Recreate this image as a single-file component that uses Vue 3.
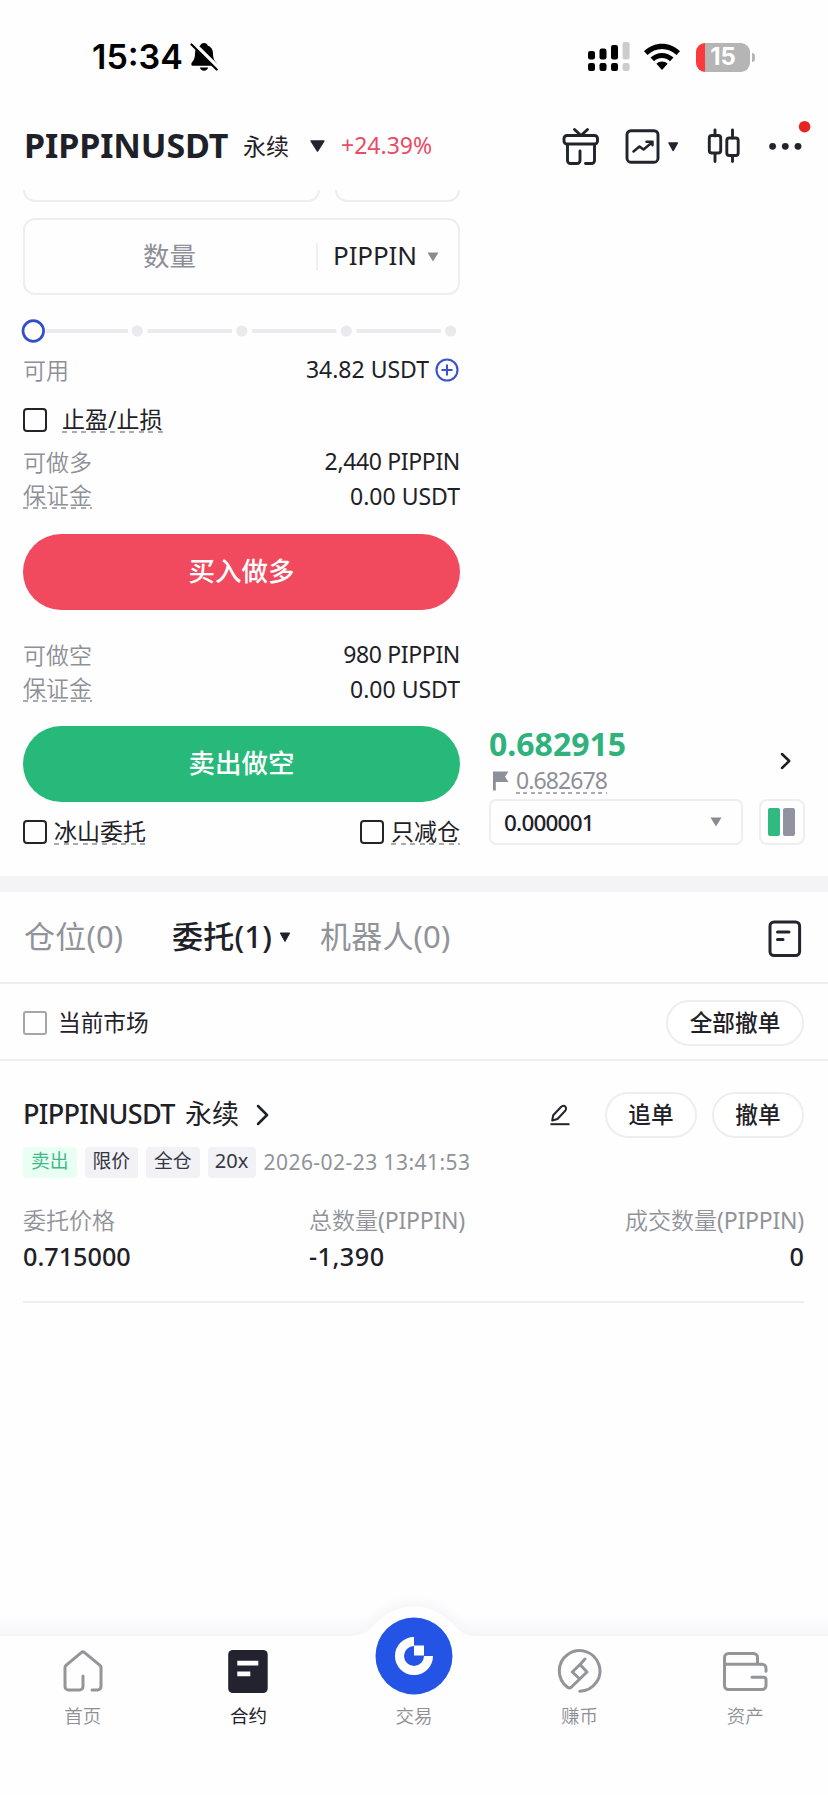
<script setup>
const tags = [
  { text: '限价', cls: 'w54' },
  { text: '全仓', cls: 'w54' },
  { text: '20x', cls: 'w48' },
]
const dots = [137.3, 241.8, 346.3, 450.5]
</script>

<template>
  <div class="page">
    <div class="status">
      <span class="time">15:34</span>
      <svg class="bell" width="28" height="30" viewBox="0 0 28 30">
        <path d="M14 1c-2 0-3.300 1.100-3.700 2.500C6.800 4.800 5 7.800 5 11.500c0 5-1.500 7-3.300 9.200C.8 22 1.300 23.800 3 23.800h22c1.700 0 2.200-1.800 1.300-3.100C24.500 18.500 23 16.500 23 11.500c0-3.700-1.800-6.700-5.300-8C17.300 2.100 16 1 14 1z" />
        <path d="M9.800 25.500h8.400c-.5 2-2 3.200-4.200 3.200s-3.700-1.200-4.200-3.200z" />
        <path d="M2 .5L28.500 26.500" stroke="#fff" stroke-width="5" />
        <path d="M1.500 2.500L26.700 27.500" stroke="#000" stroke-width="2.200" stroke-linecap="round" />
      </svg>
      <svg class="signal" width="44" height="30" viewBox="0 0 44 30">
        <g fill="#000">
          <rect x="1" y="9" width="7" height="8.500" rx="2.200" /><rect x="12.500" y="6.500" width="7" height="11" rx="2.200" /><rect x="24" y="3" width="7" height="14.500" rx="2.200" />
          <rect x="1" y="21" width="7" height="8" rx="2.200" /><rect x="12.500" y="21" width="7" height="8" rx="2.200" /><rect x="24" y="21" width="7" height="8" rx="2.200" />
        </g>
        <g fill="#ccc"><rect x="35.600" y="0" width="7" height="17.500" rx="2.200" /><rect x="35.600" y="21" width="7" height="8" rx="2.200" /></g>
      </svg>
      <svg class="wifi" width="38" height="28" viewBox="0 0 38 28">
        <path d="M1 8.200C11-1.900 27-1.900 37 8.200l-3.500 3.700c-8-8-21-8-29 0z" />
        <path d="M7.500 14.600c6.500-6.300 16.500-6.300 23 0L27 18.200c-4.500-4.400-11.500-4.400-16 0z" />
        <path d="M13.400 20.800c3.200-3 8-3 11.200 0L19 27z" />
      </svg>
      <div class="battery"><span>15</span></div>
      <i class="nub"></i>
    </div>

    <header class="head">
      <h1>PIPPINUSDT</h1>
      <span class="perp">永续</span>
      <svg class="tri" width="15" height="12" viewBox="0 0 15 12"><path d="M1.200 1h12.600L7.500 11z" stroke="#22252f" stroke-width="1.500" stroke-linejoin="round" fill="#22252f" /></svg>
      <span class="chg">+24.39%</span>
      <svg class="tools" width="270" height="50" viewBox="0 0 270 50" fill="none" stroke="#22242c" stroke-width="2.900" stroke-linecap="round" stroke-linejoin="round">
        <path d="M21.500 7.500l6.500 6 6.500-6" />
        <rect x="11" y="13.500" width="33.500" height="8.500" rx="3" />
        <path d="M14.500 22.500v16a3 3 0 0 0 3 3h6.500a3 3 0 0 0 3-3v-9.500M41.500 22.500v16a3 3 0 0 1-3 3h-6" />
        <rect x="74" y="8.700" width="31" height="31.500" rx="4" />
        <path d="M80.500 29.500l6-5 4 3 8.500-7M93.500 19.800h6v3.500" stroke-width="2.500" />
        <path d="M116 21h8.400l-4.200 7.500z" fill="#22242c" stroke-width="1.500" />
        <path d="M162 8v6M162 31.500v8M179.500 8v8M179.500 34v5.500" />
        <rect x="156.300" y="13.500" width="11.400" height="17.500" rx="2.500" />
        <rect x="173.800" y="16" width="11.400" height="17.500" rx="2.500" />
        <g fill="#22242c" stroke="none"><circle cx="219.600" cy="24.300" r="3.400" /><circle cx="232.300" cy="24.300" r="3.400" /><circle cx="245" cy="24.300" r="3.400" /></g>
        <circle cx="251.600" cy="4.700" r="5.800" fill="#e92222" stroke="none" />
      </svg>
    </header>

    <main class="trade">
      <section class="form">
        <div class="cut"><i class="c1"></i><i class="c2"></i></div>
        <div class="qty">
          <span class="ph">数量</span>
          <span class="unit">PIPPIN</span>
          <svg width="12" height="10" viewBox="0 0 12 10"><path d="M.5.500h11L6 9.500z" fill="#888b91" /></svg>
        </div>
        <svg class="slider" width="460" height="32" viewBox="0 0 460 32">
          <path d="M46 16H128M147.500 16H232M252 16H336.500M356.500 16H441" stroke="#ebebef" stroke-width="4" />
          <circle v-for="d in dots" :key="d" :cx="d" cy="16" r="5.600" fill="#e9e9ee" />
          <circle cx="33.300" cy="16" r="10.300" fill="#fff" stroke="#314fcb" stroke-width="2.700" />
        </svg>
        <div class="row avail">
          <span class="lab">可用</span>
          <span class="val">34.82 USDT</span>
          <svg width="24" height="24" viewBox="0 0 24 24" fill="none" stroke="#3a52cc" stroke-width="2.100"><circle cx="12" cy="12" r="10.500" /><path d="M12 6.500v11M6.500 12h11" /></svg>
        </div>
        <div class="row tpsl"><i class="box"></i><span class="dash">止盈/止损</span></div>
        <div class="row r34"><span class="lab">可做多</span><span class="val tight">2,440 PIPPIN</span></div>
        <div class="row r34"><span class="lab dash">保证金</span><span class="val">0.00 USDT</span></div>
        <div class="btn red">买入做多</div>
        <div class="row r34"><span class="lab">可做空</span><span class="val tight">980 PIPPIN</span></div>
        <div class="row r34"><span class="lab dash">保证金</span><span class="val">0.00 USDT</span></div>
        <div class="btn green">卖出做空</div>
        <div class="row opts">
          <i class="box"></i><span class="dash">冰山委托</span>
          <i class="box b2"></i><span class="dash">只减仓</span>
        </div>
      </section>

      <aside class="book">
        <div class="quote">
          <div>
            <div class="price">0.682915</div>
            <div class="mark">
              <svg width="17" height="20" viewBox="0 0 17 20"><path d="M1 .5h15.500l-3.500 5.200 3.500 5.200H3.800v8.600H1z" fill="#8e9099" /></svg>
              <span class="dash">0.682678</span>
            </div>
          </div>
          <svg class="go" width="12" height="18" viewBox="0 0 12 18"><path d="M2 2l7.200 7L2 16" fill="none" stroke="#1d1e22" stroke-width="2.500" stroke-linecap="round" stroke-linejoin="round" /></svg>
        </div>
        <div class="picks">
          <div class="select"><span>0.000001</span><svg width="12" height="10" viewBox="0 0 12 10"><path d="M.5.500h11L6 9.500z" fill="#888b91" /></svg></div>
          <div class="mode"><i></i><i class="g"></i></div>
        </div>
      </aside>
    </main>

    <div class="band"></div>

    <nav class="tabs">
      <span class="t1">仓位(0)</span>
      <span class="t2">委托(1)</span>
      <svg width="12" height="11" viewBox="0 0 12 11"><path d="M1.300 1h9.400L6 9.500z" fill="#1d2029" stroke="#1d2029" stroke-linejoin="round" /></svg>
      <span class="t3">机器人(0)</span>
      <svg class="doc" width="34" height="38" viewBox="0 0 34 38" fill="none" stroke="#22242f" stroke-width="3" stroke-linecap="round"><rect x="2" y="2" width="29.600" height="33.600" rx="4" /><path d="M9.500 12h11.500M9.500 19.500h5.500" /></svg>
    </nav>

    <div class="filter">
      <i class="box thin"></i><span class="cur">当前市场</span><span class="pill big">全部撤单</span>
    </div>

    <section class="order">
      <div class="otop">
        <span class="sym">PIPPINUSDT</span><span class="oz">永续</span>
        <svg width="14" height="22" viewBox="0 0 14 22"><path d="M2 2l9 9-9 9" fill="none" stroke="#1d2026" stroke-width="2.500" stroke-linecap="round" stroke-linejoin="round" /></svg>
        <svg class="pen" width="22" height="22" viewBox="0 0 22 22" fill="none" stroke="#22252d" stroke-width="2" stroke-linejoin="round"><path d="M3.200 16.500l1-5.200L12 3c1.200-1.300 3-1.500 4.200-.4s1.200 2.900 0 4.100L8.500 15z" /><path d="M1.500 20.200h19" /></svg>
        <span class="pill">追单</span><span class="pill">撤单</span>
      </div>
      <div class="tags">
        <span class="tag w54 sell">卖出</span>
        <span v-for="t in tags" :key="t.text" class="tag" :class="t.cls">{{ t.text }}</span>
        <time>2026-02-23 13:41:53</time>
      </div>
      <div class="cols">
        <div class="a"><p>委托价格</p><b>0.715000</b></div>
        <div class="m"><p>总数量<em>(PIPPIN)</em></p><b>-1,390</b></div>
        <div class="z"><p>成交数量<em>(PIPPIN)</em></p><b>0</b></div>
      </div>
    </section>

    <footer class="nav">
      <svg class="edge" width="828" height="60" viewBox="0 0 828 60">
        <defs>
          <linearGradient id="sh" x1="0" y1="0" x2="0" y2="1"><stop offset="0" stop-color="#f6f6fa" stop-opacity="0" /><stop offset="1" stop-color="#f5f5f9" /></linearGradient>
          <radialGradient id="rg"><stop offset=".78" stop-color="#f6f6fa" /><stop offset="1" stop-color="#f6f6fa" stop-opacity="0" /></radialGradient>
        </defs>
        <rect y="23" width="828" height="22" fill="url(#sh)" />
        <circle cx="414" cy="66" r="63" fill="url(#rg)" />
        <path d="M0 45H350C366 45 370 38 377 31C399 10 429 10 451 31C458 38 462 45 478 45H828V60H0z" fill="#fefefe" />
      </svg>
      <div class="item">
        <svg width="46" height="46" viewBox="0 0 46 46" fill="none" stroke="#939598" stroke-width="3" stroke-linecap="round" stroke-linejoin="round"><path d="M23 28v10.500a3.500 3.500 0 0 1-3.500 3.500H8.500A3.500 3.500 0 0 1 5 38.500V19.500a3 3 0 0 1 1-2.200L21.200 4.600a2.500 2.500 0 0 1 3.400 0L40 17.300a3 3 0 0 1 1 2.200v19a3.500 3.500 0 0 1-3.500 3.500H32" /></svg>
        <span>首页</span>
      </div>
      <div class="item on">
        <svg width="46" height="46" viewBox="0 0 46 46"><rect x="3.200" y="2" width="39.500" height="43" rx="4.500" fill="#22232f" /><path d="M12.300 15.200h21M12.300 25.800h13" stroke="#fff" stroke-width="4.800" /></svg>
        <span>合约</span>
      </div>
      <div class="item">
        <div class="orb"><svg width="78" height="78" viewBox="0 0 78 78"><circle cx="39" cy="39" r="38.500" fill="#2354e6" /><path d="M39 24.500A14.500 14.500 0 1 0 53.500 39" fill="none" stroke="#fff" stroke-width="9" /><rect x="39" y="28.500" width="10" height="10" fill="#fff" /></svg></div>
        <span>交易</span>
      </div>
      <div class="item">
        <svg width="46" height="46" viewBox="0 0 46 46" fill="none" stroke="#939598" stroke-width="3" stroke-linecap="round" stroke-linejoin="round"><path d="M22.800 43.200A20.300 20.300 0 1 0 10.500 39.200Q13 41 15 38.500L30 24L23 16.500L15.300 24L22.800 31M23 16.500L28 11" /></svg>
        <span>赚币</span>
      </div>
      <div class="item">
        <svg width="46" height="46" viewBox="0 0 46 46" fill="none" stroke="#939598" stroke-width="3" stroke-linecap="round" stroke-linejoin="round"><path d="M2.500 16.500V9.500a4 4 0 0 1 4-4h25a4 4 0 0 1 4 4v6.500M2.500 16.500V37.500a4 4 0 0 0 4 4h33.500a4 4 0 0 0 4-4v-5.700a2.500 2.500 0 0 0-2.500-2.500H30M2.500 16.200h37.500a4 4 0 0 1 4 4v3" /></svg>
        <span>资产</span>
      </div>
    </footer>
  </div>
</template>

<style>
body { margin: 0; background: #fefefe; }
</style>

<style scoped>
* { box-sizing: border-box; }
.page { width: 828px; height: 1795px; display: flex; flex-direction: column; background: #fefefe; color: #1f2128; font-family: "Noto Sans", "Noto Sans CJK SC", sans-serif; font-size: 23px; overflow: hidden; white-space: nowrap; }
svg { display: block; flex: none; }
.status { height: 102px; display: flex; align-items: center; padding: 12px 0 0 92px; flex: none; }
.time { font: 600 34px/40px Inter, sans-serif; color: #000; width: 98px; }
.signal { margin-left: 369px; }
.wifi { margin-left: 12px; }
.battery { margin-left: 15px; width: 54px; height: 29px; border-radius: 9px; background: linear-gradient(90deg, #fb3a3e 8.500px, #b5b5b5 8.500px); color: #fff; font: 700 24px/28px Inter, sans-serif; text-align: center; }
.nub { width: 3px; height: 9px; border-radius: 0 4px 4px 0; background: #b5b5b5; margin-left: 2px; }
.head { height: 88px; display: flex; align-items: center; padding: 0 0 2px 24px; flex: none; }
h1 { margin: 0; font-size: 34px; line-height: 40px; font-weight: 700; width: 219px; letter-spacing: -.1px; }
.perp { font-size: 23px; width: 67px; font-weight: 400; }
.tri { margin-top: 2px; }
.chg { color: #e84c66; font-size: 23px; margin-left: 16px; width: 100px; }
.tools { margin: 4px 0 0 112px; overflow: visible; }
.trade { height: 686px; display: flex; flex: none; }
.form { width: 460px; padding-left: 23px; flex: none; }
.cut { height: 12px; display: flex; gap: 15px; overflow: hidden; align-items: flex-end; }
.cut i { height: 40px; border: 2px solid #eeeef0; border-radius: 12px; }
.c1 { width: 297px; flex: none; } .c2 { width: 125px; }
.qty { margin-top: 16px; height: 77px; border: 2px solid #eeeeF0; border-radius: 12px; display: flex; align-items: center; }
.ph { width: 293px; height: 28px; line-height: 26px; text-align: center; color: #8d9097; font-size: 26.500px; border-right: 2px solid #f0f0f2; padding-right: 2px; }
.unit { font-size: 26px; line-height: 34px; font-weight: 450; width: 94px; margin: 0 0 3px 15px; letter-spacing: -.1px; }
.slider { margin: 20px 0 0 -23px; }
.row { display: flex; align-items: center; }
.lab { color: #8d9097; font-weight: 350; padding: 0 0 3px; }
.val { margin-left: auto; padding-bottom: 2px; }
.tight { letter-spacing: -.35px; }
.avail { height: 46px; }
.avail svg { margin: 0 1px 0 6px; }
.tpsl { height: 54px; margin-bottom: -2px; }
.box { width: 24px; height: 24px; border: 2.500px solid #22242a; border-radius: 4px; flex: none; }
.tpsl .dash { margin-left: 15px; }
.r34 { height: 34.500px; }
.dash { height: 26px; line-height: 24px; padding: 0; background: repeating-linear-gradient(90deg, #a9abb2 0 5px, transparent 5px 9.600px) left bottom / 100% 2px no-repeat; }
.r34 .dash { margin-top: -2px; }
.btn { height: 76px; border-radius: 38px; color: #fff; font-size: 26.500px; font-weight: 500; line-height: 75px; text-align: center; }
.red { background: #f1495d; margin: 20px 0 28px; }
.green { background: #26b97a; margin: 19px 0 0; }
.opts { height: 58px; margin-top: 1px; }
.opts .dash { margin-left: 7px; font-size: 23px; }
.opts .b2 { margin-left: auto; }
.book { width: 345px; padding: 530px 0 0 29px; flex: none; }
.quote { display: flex; height: 79px; justify-content: space-between; width: 303px; }
.price { font-size: 32px; line-height: 40px; height: 40px; padding-top: 4px; font-weight: 700; color: #30b27c; }
.mark { display: flex; align-items: center; height: 41px; color: #8e9099; }
.mark svg { margin: 0 7px 0 3px; }
.go { margin-top: 32px; }
.mark .dash { letter-spacing: -.9px; background-image: repeating-linear-gradient(90deg, #a9abb2 0 4px, transparent 4px 7.500px); }
.picks { display: flex; gap: 16px; }
.select { width: 254px; height: 46px; border: 2px solid #eeeeF0; border-radius: 7px; display: flex; align-items: center; justify-content: space-between; padding: 0 19px 0 13px; font-weight: 500; font-size: 22.500px; letter-spacing: -.8px; }
.mode { width: 46px; height: 46px; border: 2px solid #eeeeF0; border-radius: 8px; display: flex; gap: 3px; align-items: center; justify-content: center; flex: none; padding-right: 1px; }
.mode i { width: 12px; height: 28px; background: #30b981; border-radius: 2px; }
.mode .g { background: #9193a0; }
.band { height: 16px; background: #f4f4f7; flex: none; }
.tabs { height: 92px; border-bottom: 2px solid #eeeeF0; display: flex; align-items: center; padding: 0 0 0 24px; font-size: 31px; color: #909399; flex: none; letter-spacing: .2px; }
.tabs span { padding-bottom: 5px; }
.tabs svg { margin-top: 1px; }
.t1 { width: 148px; } .t2 { width: 107px; color: #1f2128; font-weight: 500; } .t3 { margin-left: 29px; width: 448px; }
.tabs .doc { margin: 3px 0 0; }
.filter { height: 77px; border-bottom: 2px solid #eeeeF0; display: flex; align-items: center; padding: 2px 24px 0 23px; flex: none; }
.thin { border: 2px solid #a5a6aa; border-radius: 3px; }
.cur { margin: -2px 0 0 11px; font-size: 22.700px; }
.pill { width: 92px; height: 46px; border: 2px solid #eeeeF0; border-radius: 23px; text-align: center; line-height: 41px; font-size: 22.700px; font-weight: 500; background: #fff; }
.big { width: 138px; margin-left: auto; }
.order { margin: 0 24px 0 23px; height: 242px; border-bottom: 2px solid #eeeeF0; padding-top: 31px; flex: none; }
.otop { height: 46px; display: flex; align-items: center; }
.sym { font-size: 27px; line-height: 36px; padding-bottom: 3px; font-weight: 500; width: 162px; letter-spacing: -.65px; }
.oz { font-size: 27px; line-height: 36px; padding-bottom: 3px; width: 71px; font-weight: 400; }
.pen { margin-left: auto; margin-right: 34px; }
.otop .pill + .pill { margin-left: 15px; }
.tags { display: flex; gap: 8px; height: 32px; margin-top: 8px; align-items: center; }
.tag { height: 31px; border-radius: 4px; background: #f1f1f6; color: #343743; font-size: 18.800px; line-height: 28px; text-align: center; }
.w54 { width: 53.500px; } .w48 { width: 48px; font-size: 20px; }
.sell { background: #eafff3; color: #3fb98a; }
time { color: #909399; font-size: 21px; line-height: 28px; letter-spacing: .45px; padding-bottom: 1px; }
.cols { display: flex; margin-top: 25px; }
.cols p { margin: 0; font-size: 23px; height: 35px; line-height: 35px; color: #909399; font-weight: 350; }
.cols em { font-style: normal; font-weight: 400; letter-spacing: -.2px; }
.cols b { display: block; font-size: 25.200px; line-height: 36px; font-weight: 500; }
.a { width: 286px; } .z { margin-left: auto; text-align: right; }
.m b { letter-spacing: .5px; }
.nav { margin-top: auto; height: 159px; display: flex; position: relative; flex: none; background: #fefefe; }
.edge { position: absolute; left: 0; top: -45px; }
.item { width: 165.600px; display: flex; flex-direction: column; align-items: center; padding-top: 12px; font-size: 18.500px; color: #8d9097; position: relative; font-weight: 350; }
.item span { line-height: 26px; margin-top: 9px; }
.item.on { color: #1f2128; font-weight: 400; }
.orb { height: 47px; margin-bottom: -1px; display: flex; align-items: flex-end; }
</style>
